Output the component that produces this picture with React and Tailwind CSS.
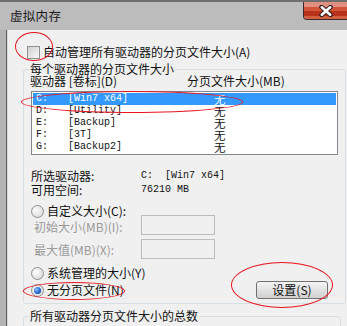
import React from "react";

const cjk = { fontFamily: '"Noto Sans CJK SC", "Noto Sans", sans-serif' };
const mono = { fontFamily: '"Liberation Mono", "Noto Sans CJK SC", monospace' };

const drives = [
  { d: "C:", label: "[Win7 x64]", size: "无", sel: true },
  { d: "D:", label: "[Utility]", size: "无" },
  { d: "E:", label: "[Backup]", size: "无" },
  { d: "F:", label: "[3T]", size: "无" },
  { d: "G:", label: "[Backup2]", size: "无" },
];

const Radio = ({ checked }) => (
  <span className="w-[13px] h-[13px] rounded-full border border-[#8f8f8f] bg-[radial-gradient(circle_at_35%_35%,#fdfdfd,#d4d4d4)] flex items-center justify-center shrink-0">
    {checked && (
      <span className="w-[7px] h-[7px] rounded-full bg-[#1a5fc8] bg-[radial-gradient(circle_at_35%_35%,#8cc4ff,#1a5fc8_60%,#0b3a8a)]" />
    )}
  </span>
);

const Ellipse = ({ cls }) => (
  <div className={`absolute rounded-[50%] border-[1.5px] border-[#e8141c] pointer-events-none ${cls}`} />
);

export default function App() {
  return (
    <div className="relative w-[347px] h-[326px] overflow-hidden bg-[#f0f0f0] text-[12px] leading-[14px] text-[#111]" style={cjk}>
      {/* title bar */}
      <div className="h-[30px] flex items-start bg-[#bcbcbc] border-t-[2px] border-[#6e6e6e]">
        <div className="flex-1 pt-[7px] pl-[10px]">
          <span className="text-[12.5px] tracking-[0.3px] text-[#1a1a1a]">虚拟内存</span>
        </div>
        <div className="w-[44px] h-[18px] shrink-0 flex flex-col border-l border-b border-[#3e2a2a] rounded-bl-[4px] overflow-hidden relative">
          <div className="h-[5px] bg-[#e09080]" />
          <div className="h-[4px] bg-[#d2553a]" />
          <div className="h-[5px] bg-[#b8321a]" />
          <div className="flex-1 bg-[#d0603f]" />
          <svg className="absolute left-[14px] top-[3px]" width="16" height="12" viewBox="0 0 16 12">
            <path d="M3.5 2 L12.5 10 M12.5 2 L3.5 10" stroke="#3a2424" strokeWidth="4.6" strokeLinecap="round" />
            <path d="M3.8 2.3 L12.2 9.7 M12.2 2.3 L3.8 9.7" stroke="#fff" strokeWidth="2.6" strokeLinecap="round" />
          </svg>
        </div>
      </div>

      <div className="flex h-[296px]">
        {/* left frame */}
        <div className="w-[8px] flex bg-[#b4b4b4]">
          <div className="w-[6px]" />
          <div className="w-[1px] bg-[#5f5f5f]" />
          <div className="w-[1px] bg-[#d8d8d8]" />
        </div>

        {/* client */}
        <div className="flex-1 bg-[#f0f0f0] pl-[15px]">
          <div className="mt-[15px] ml-[4px] h-[14px] flex items-center gap-[3px]">
            <span className="w-[13px] h-[13px] border border-[#8f8f8f] bg-[#e4e4e4] bg-linear-to-br from-[#d0d0d0] to-[#f8f8f8]" />
            <span>自动管理所有驱动器的分页文件大小(A)</span>
          </div>

          <fieldset className="mt-[3px] w-[318px] h-[242px] border border-[#d5dfe5] rounded-[3px] px-[7px]">
            <legend className="-ml-[2px] px-[1px] h-[14px]">每个驱动器的分页文件大小</legend>
            <div className="-ml-[1px] -mt-[2px] flex h-[13px] items-center">
              <span className="w-[157px]">驱动器 [卷标](D)</span>
              <span>分页文件大小(MB)</span>
            </div>

            <div className="mt-[4px] w-[307px] h-[64px] border border-[#828790] bg-white p-[1px]">
              {drives.map((r) => (
                <div
                  key={r.d}
                  className={`h-[12px] flex items-center pl-[3px] ${r.sel ? "bg-[#3399ff] text-white" : "text-[#111]"}`}
                >
                  <span className="w-[32px] text-[10px]" style={mono}>{r.d}</span>
                  <span className="w-[146px] text-[10px]" style={mono}>{r.label}</span>
                  <span className="text-[11.5px] leading-[12px]">{r.size}</span>
                </div>
              ))}
            </div>

            <div className="mt-[14px] flex h-[14px] items-center">
              <span className="w-[110px]">所选驱动器:</span>
              <span className="text-[10px] whitespace-pre" style={mono}>C:  [Win7 x64]</span>
            </div>
            <div className="flex h-[14px] items-center">
              <span className="w-[110px]">可用空间:</span>
              <span className="text-[10px]" style={mono}>76210 MB</span>
            </div>

            <div className="mt-[7px] flex h-[14px] items-center gap-[3px]">
              <Radio />
              <span>自定义大小(C):</span>
            </div>
            <div className="mt-[-3px] flex h-[20px] items-center">
              <span className="w-[110px] pl-[3px] pt-[4px] text-[#9a9a9a]">初始大小(MB)(I):</span>
              <span className="w-[74px] h-[20px] border border-[#bcbcbc] bg-[#f0f0f0]" />
            </div>
            <div className="mt-[4px] flex h-[20px] items-center">
              <span className="w-[110px] pl-[3px] pt-[2px] text-[#9a9a9a]">最大值(MB)(X):</span>
              <span className="w-[74px] h-[20px] border border-[#bcbcbc] bg-[#f0f0f0]" />
            </div>

            <div className="mt-[7px] flex h-[14px] items-center gap-[3px]">
              <Radio />
              <span>系统管理的大小(Y)</span>
            </div>
            <div className="mt-[1px] flex h-[18px] items-center">
              <div className="flex items-center gap-[3px] w-[225px]">
                <Radio checked />
                <span>无分页文件(N)</span>
              </div>
              <button className="w-[72px] h-[18px] border border-[#707070] rounded-[3px] bg-[#e2e2e2] bg-linear-to-b from-[#f4f4f4] to-[#d0d0d0] text-[12px] leading-[14px]">
                设置(S)
              </button>
            </div>
          </fieldset>

          <fieldset className="mt-[5px] w-[318px] h-[30px] border border-[#d5dfe5] rounded-[3px] px-[7px]">
            <legend className="-ml-[2px] px-[1px] h-[14px]">所有驱动器分页文件大小的总数</legend>
          </fieldset>
        </div>
      </div>

      {/* red annotation ellipses */}
      <Ellipse cls="left-[15px] top-[32px] w-[38px] h-[29px]" />
      <Ellipse cls="left-[21px] top-[91px] w-[222px] h-[22px]" />
      <Ellipse cls="left-[23px] top-[282px] w-[102px] h-[18px]" />
      <Ellipse cls="left-[231px] top-[262px] w-[102px] h-[46px]" />
    </div>
  );
}
